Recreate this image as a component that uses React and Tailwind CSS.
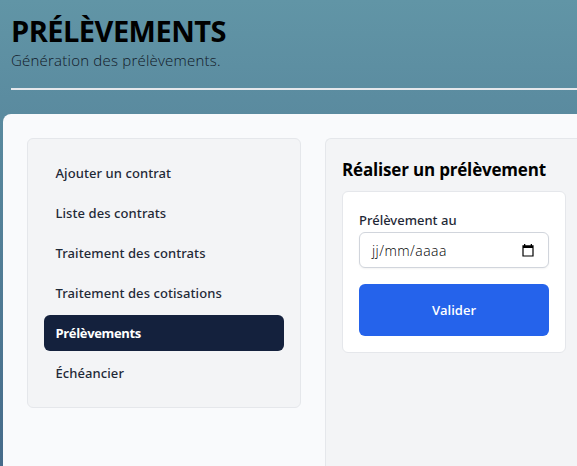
const links = [
  { label: "Ajouter un contrat" },
  { label: "Liste des contrats" },
  { label: "Traitement des contrats" },
  { label: "Traitement des cotisations" },
  { label: "Prélèvements", active: true },
  { label: "Échéancier" },
];

function CalendarIcon() {
  return (
    <svg width="12" height="13" viewBox="0 0 12 13">
      <path
        fill="#000"
        fillRule="evenodd"
        d="M2 0h1.3v1.2h5.4V0H10v1.2h1.6v11.3H.4V1.2H2zM1.6 4v7.4h8.8V4z"
      />
    </svg>
  );
}

function Menu() {
  return (
    <nav className="flex w-[274px] shrink-0 flex-col gap-1 self-start rounded-md border border-gray-200 bg-[#f3f4f6] p-4">
      {links.map(({ label, active }) => (
        <a
          key={label}
          className={`flex h-9 items-center whitespace-nowrap rounded-md pl-[11.5px] pr-3 pt-[2px] text-[13px] ${
            active
              ? "bg-[#14213d] font-bold tracking-[-0.35px] text-white"
              : "font-['Noto_Sans',sans-serif] font-medium tracking-[0.08px] text-[#1f2937]"
          }`}
        >
          {label}
        </a>
      ))}
    </nav>
  );
}

function DebitForm() {
  return (
    <form className="flex w-[224px] flex-col rounded-md border border-gray-200 bg-white p-4">
      <label className="mb-1 block whitespace-nowrap pt-1 font-['Noto_Sans',sans-serif] text-[13px] font-medium leading-4 text-[#1f2937]">
        Prélèvement au
      </label>
      <div className="flex h-9 items-center justify-between rounded-md border border-gray-300 bg-white pl-3 pr-[14px] text-[14px] font-light tracking-[0.45px] text-black shadow-xs">
        <span>jj/mm/aaaa</span>
        <CalendarIcon />
      </div>
      <button
        type="button"
        className="mt-4 h-[52px] rounded-md bg-[#2563eb] pt-[2px] text-[13px] font-semibold text-white"
      >
        Valider
      </button>
    </form>
  );
}

export default function App() {
  return (
    <div className="flex h-[466px] w-[577px] flex-col overflow-hidden bg-linear-to-b from-[#6195a6] to-[#466b8a] font-['Open_Sans','Noto_Sans',sans-serif]">
      <header className="ml-[11px] h-[90px] shrink-0 border-b-2 border-gray-200 pt-[13px]">
        <h1 className="whitespace-nowrap text-[29px] font-bold leading-9 tracking-[-0.53px] text-black">
          PRÉLÈVEMENTS
        </h1>
        <p className="whitespace-nowrap text-[15px] font-light leading-[22px] tracking-[0.22px] text-[#111827]">
          Génération des prélèvements.
        </p>
      </header>
      <main className="ml-[3px] mt-6 flex flex-1 gap-6 rounded-tl-lg bg-[#f9fafc] pl-6 pt-6">
        <Menu />
        <section className="flex-1 rounded-tl-md border-l border-t border-gray-200 bg-[#f3f4f6] p-4">
          <h2 className="mb-2 whitespace-nowrap pt-px text-[17px] font-bold leading-[27px] tracking-[-0.18px] text-black">
            Réaliser un prélèvement
          </h2>
          <DebitForm />
        </section>
      </main>
    </div>
  );
}
